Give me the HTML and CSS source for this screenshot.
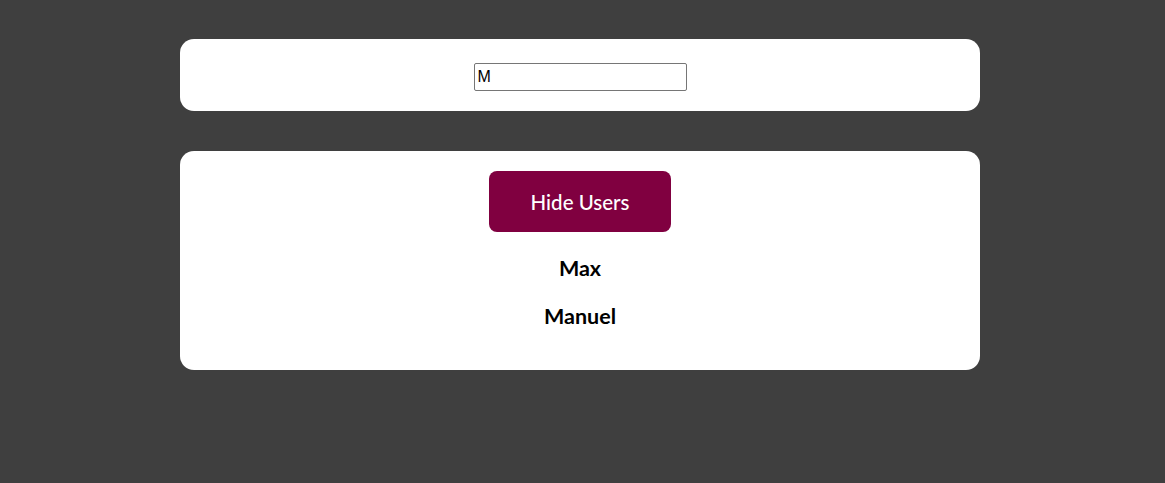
FILE: index.html
```html
<!DOCTYPE html>
<html lang="en">
<head>
<meta charset="utf-8">
<title>Users</title>
<link rel="stylesheet" href="styles.css">
</head>
<body>
<main class="page">
  <section class="card search-card">
    <input class="search-input" type="search" value="M">
  </section>
  <section class="card users-card">
    <button class="toggle-btn">Hide Users</button>
    <ul class="user-list">
      <li class="user">Max</li>
      <li class="user">Manuel</li>
    </ul>
  </section>
</main>
</body>
</html>
```
FILE: styles.css
```css
html, body {
  margin: 0;
  padding: 0;
  background: #3f3f3f;
  font-family: Lato, "Open Sans", sans-serif;
}
.page {
  width: 800px;
  margin: 0 auto;
  padding: 39px 5px 0 0;
  display: flex;
  flex-direction: column;
  gap: 40px;
}
.card {
  background: #fff;
  border-radius: 14px;
  display: flex;
  flex-direction: column;
  align-items: center;
}
.search-card {
  height: 72px;
  padding-top: 24px;
  box-sizing: border-box;
}
.search-input {
  -webkit-appearance: none;
  appearance: none;
  width: 213px;
  height: 28px;
  box-sizing: border-box;
  border: 1px solid #767676;
  border-radius: 2px;
  padding: 1px 3px;
  font-family: "Liberation Sans", Arial, sans-serif;
  font-size: 16px;
  color: #000;
  outline: none;
  margin: 0;
}
.users-card {
  height: 219px;
  padding-top: 20px;
  box-sizing: border-box;
}
.toggle-btn {
  width: 182px;
  height: 61px;
  padding: 0;
  background: #800040;
  color: #fff;
  border: none;
  border-radius: 8px;
  font-family: Lato, "Open Sans", sans-serif;
  font-size: 20.5px;
  font-weight: 500;
  cursor: pointer;
}
.user-list {
  list-style: none;
  margin: 0;
  padding: 0;
  display: flex;
  flex-direction: column;
  align-items: center;
  gap: 24px;
  margin-top: 24px;
}
.user {
  font-size: 21.5px;
  font-weight: 700;
  line-height: 24px;
  color: #000;
}
```
